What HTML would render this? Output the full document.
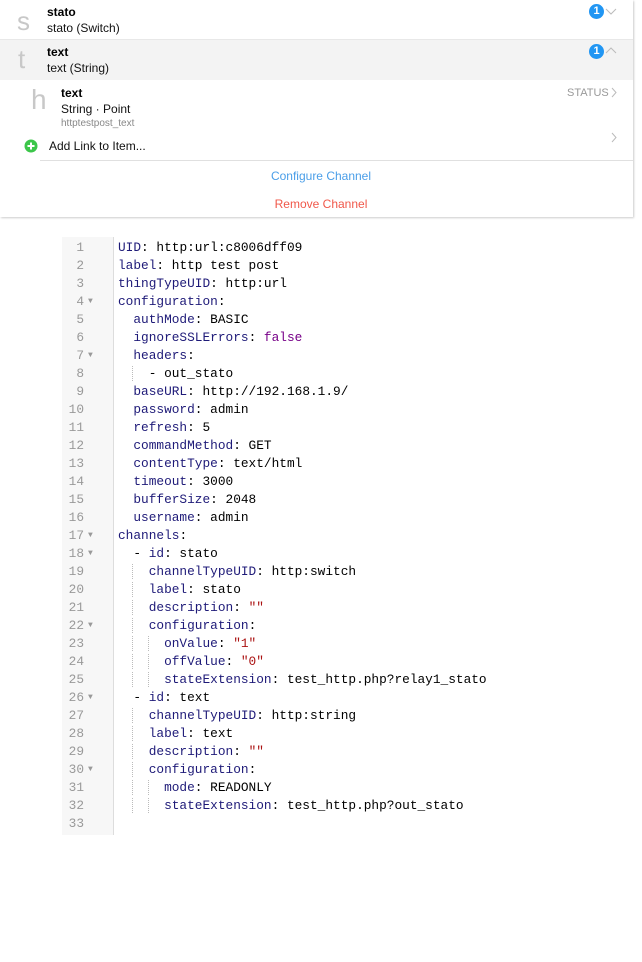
<!DOCTYPE html>
<html><head><meta charset="utf-8"><style>
body{margin:0;width:642px;height:962px;background:#fff;font-family:"Liberation Sans",sans-serif;position:relative;overflow:hidden}
.panel{position:absolute;left:0;top:0;width:633px;height:217px;background:#fff;box-shadow:1px 1px 2px rgba(0,0,0,.2)}
.row{position:absolute;left:0;width:633px}
.letter{position:absolute;font-size:26px;color:#c8c8c8;font-weight:300}
.t1{position:absolute;font-size:12px;font-weight:bold;color:#000}
.t2{position:absolute;font-size:12px;color:#111}
.badge{position:absolute;width:15px;height:15px;border-radius:50%;background:#2196f3;color:#fff;font-size:11px;font-weight:bold;text-align:center;line-height:15px}
.code{position:absolute;left:62px;top:237px;width:51px;height:598px;background:#f7f7f7;border-right:1px solid #ddd}
pre{margin:0;font-family:"Liberation Mono",monospace;font-size:12.8px;line-height:18px}
.gut{position:absolute;left:62px;top:239px;color:#999}
.gut div{height:18px;position:relative}
.gut b{font-weight:normal;display:inline-block;width:22px;text-align:right}
.gut i{position:absolute;left:26px;top:0;font-style:normal;font-size:8px;line-height:18px;color:#999}
.src{position:absolute;left:118px;top:239px;color:#000}
.k{color:#1e1a78}.b{color:#770088}.s{color:#aa1111}
.g{border-left:1px dotted #bbb;margin-left:-1px}
</style></head><body>
<div class="panel">
 <div class="row" style="top:0;height:39px;border-bottom:1px solid #e8e8e8">
  <div class="letter" style="left:17px;top:6px">s</div>
  <div class="t1" style="left:47px;top:5px">stato</div>
  <div class="t2" style="left:47px;top:21px">stato (Switch)</div>
  <div class="badge" style="left:589px;top:4px">1</div>
  <svg style="position:absolute;left:605px;top:8px" width="12" height="8"><path d="M1 1 L6 6 L11 1" fill="none" stroke="#bbb" stroke-width="1"/></svg>
 </div>
 <div class="row" style="top:40px;height:40px;background:#f3f3f3">
  <div class="letter" style="left:18px;top:4px">t</div>
  <div class="t1" style="left:47px;top:5px">text</div>
  <div class="t2" style="left:47px;top:21px">text (String)</div>
  <div class="badge" style="left:589px;top:4px">1</div>
  <svg style="position:absolute;left:605px;top:7px" width="12" height="8"><path d="M1 6 L6 1 L11 6" fill="none" stroke="#bbb" stroke-width="1"/></svg>
 </div>
 <div class="letter" style="left:31px;top:84px;font-size:28px">h</div>
 <div class="t1" style="left:61px;top:86px">text</div>
 <div class="t2" style="left:61px;top:102px">String · Point</div>
 <div class="t2" style="left:61px;top:118px;font-size:10px;color:#888">httptestpost_text</div>
 <div class="t2" style="left:567px;top:87px;font-size:11px;color:#999">STATUS</div>
 <svg style="position:absolute;left:611px;top:87px" width="6" height="11"><path d="M1 1 L5 5.5 L1 10" fill="none" stroke="#bbb"/></svg>
 <svg style="position:absolute;left:611px;top:132px" width="6" height="11"><path d="M1 1 L5 5.5 L1 10" fill="none" stroke="#bbb"/></svg>
 <svg style="position:absolute;left:24px;top:139px" width="14" height="14"><circle cx="7" cy="7" r="6.5" fill="#3cc64a"/><path d="M7 3.5V10.5M3.5 7H10.5" stroke="#fff" stroke-width="2"/></svg>
 <div class="t2" style="left:49px;top:139px">Add Link to Item...</div>
 <div style="position:absolute;left:40px;top:160px;width:593px;border-top:1px solid #e0e0e0"></div>
 <div class="t2" style="left:0;width:642px;text-align:center;top:169px;color:#4a9ee8">Configure Channel</div>
 <div class="t2" style="left:0;width:642px;text-align:center;top:197px;color:#f0584a">Remove Channel</div>
</div>
<div class="code"></div>
<pre class="gut"><div><b>1</b></div><div><b>2</b></div><div><b>3</b></div><div><b>4</b><i>▼</i></div><div><b>5</b></div><div><b>6</b></div><div><b>7</b><i>▼</i></div><div><b>8</b></div><div><b>9</b></div><div><b>10</b></div><div><b>11</b></div><div><b>12</b></div><div><b>13</b></div><div><b>14</b></div><div><b>15</b></div><div><b>16</b></div><div><b>17</b><i>▼</i></div><div><b>18</b><i>▼</i></div><div><b>19</b></div><div><b>20</b></div><div><b>21</b></div><div><b>22</b><i>▼</i></div><div><b>23</b></div><div><b>24</b></div><div><b>25</b></div><div><b>26</b><i>▼</i></div><div><b>27</b></div><div><b>28</b></div><div><b>29</b></div><div><b>30</b><i>▼</i></div><div><b>31</b></div><div><b>32</b></div><div><b>33</b></div></pre>
<pre class="src"><span class="k">UID</span>: http:url:c8006dff09
<span class="k">label</span>: http test post
<span class="k">thingTypeUID</span>: http:url
<span class="k">configuration</span>:
  <span class="k">authMode</span>: BASIC
  <span class="k">ignoreSSLErrors</span>: <span class="b">false</span>
  <span class="k">headers</span>:
  <span class="g">  </span>- out_stato
  <span class="k">baseURL</span>: http://192.168.1.9/
  <span class="k">password</span>: admin
  <span class="k">refresh</span>: 5
  <span class="k">commandMethod</span>: GET
  <span class="k">contentType</span>: text/html
  <span class="k">timeout</span>: 3000
  <span class="k">bufferSize</span>: 2048
  <span class="k">username</span>: admin
<span class="k">channels</span>:
  - <span class="k">id</span>: stato
  <span class="g">  </span><span class="k">channelTypeUID</span>: http:switch
  <span class="g">  </span><span class="k">label</span>: stato
  <span class="g">  </span><span class="k">description</span>: <span class="s">""</span>
  <span class="g">  </span><span class="k">configuration</span>:
  <span class="g">  </span><span class="g">  </span><span class="k">onValue</span>: <span class="s">"1"</span>
  <span class="g">  </span><span class="g">  </span><span class="k">offValue</span>: <span class="s">"0"</span>
  <span class="g">  </span><span class="g">  </span><span class="k">stateExtension</span>: test_http.php?relay1_stato
  - <span class="k">id</span>: text
  <span class="g">  </span><span class="k">channelTypeUID</span>: http:string
  <span class="g">  </span><span class="k">label</span>: text
  <span class="g">  </span><span class="k">description</span>: <span class="s">""</span>
  <span class="g">  </span><span class="k">configuration</span>:
  <span class="g">  </span><span class="g">  </span><span class="k">mode</span>: READONLY
  <span class="g">  </span><span class="g">  </span><span class="k">stateExtension</span>: test_http.php?out_stato
</pre>
</body></html>
